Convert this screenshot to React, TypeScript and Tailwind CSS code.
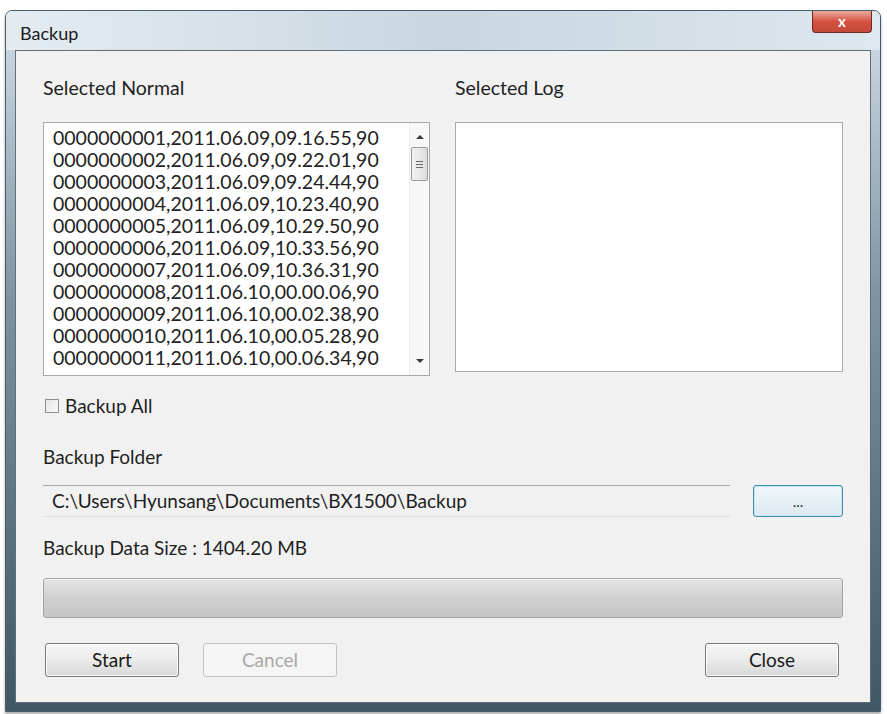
const rows = [
  '0000000001,2011.06.09,09.16.55,90',
  '0000000002,2011.06.09,09.22.01,90',
  '0000000003,2011.06.09,09.24.44,90',
  '0000000004,2011.06.09,10.23.40,90',
  '0000000005,2011.06.09,10.29.50,90',
  '0000000006,2011.06.09,10.33.56,90',
  '0000000007,2011.06.09,10.36.31,90',
  '0000000008,2011.06.10,00.00.06,90',
  '0000000009,2011.06.10,00.02.38,90',
  '0000000010,2011.06.10,00.05.28,90',
  '0000000011,2011.06.10,00.06.34,90',
];

const font = "font-['Lato','Open_Sans',sans-serif]";

function PushButton({ label, disabled }: { label: string; disabled?: boolean }) {
  return (
    <button
      className={
        disabled
          ? 'h-[34px] w-[134px] rounded-[3px] border border-[#c4c4c4] bg-[#f5f5f5] text-[19px] text-[#a8a8a8]'
          : 'h-[34px] w-[134px] rounded-[3px] border border-[#7a7a7a] bg-gradient-to-b from-[#f6f6f6] via-[#ebebeb] to-[#d8d8d8] text-[19px] text-[#1a1a1a] shadow-[inset_0_0_0_1px_#fbfbfb]'
      }
    >
      {label}
    </button>
  );
}

function ListScrollbar() {
  return (
    <div className="flex w-[20px] flex-col items-center border-l border-[#ececec] bg-[#f7f7f7] py-[12px]">
      <span className="h-0 w-0 border-x-[4px] border-b-[4px] border-x-transparent border-b-[#3c3c3c]" />
      <div className="mt-[8px] flex h-[34px] w-[17px] flex-col items-center justify-center gap-[2px] rounded-[2px] border border-[#9a9a9a] bg-gradient-to-r from-[#f4f4f4] to-[#dcdcdc]">
        <span className="h-px w-[7px] bg-[#6a6a6a]" />
        <span className="h-px w-[7px] bg-[#6a6a6a]" />
        <span className="h-px w-[7px] bg-[#6a6a6a]" />
      </div>
      <div className="flex-1" />
      <span className="h-0 w-0 border-x-[4px] border-t-[4px] border-x-transparent border-t-[#3c3c3c]" />
    </div>
  );
}

export default function App() {
  return (
    <div className={`h-[714px] w-[887px] bg-white pl-[5px] pt-[10px] ${font}`}>
      {/* window frame */}
      <div className="flex h-[702px] w-[876px] flex-col rounded-t-[7px] border border-[#4a5c68] bg-gradient-to-b from-[#d3dfe8] via-[#7f95a5] via-40% to-[#3f5767] shadow-[0_2px_3px_rgba(0,0,0,0.35)]">
        <div className="flex h-[39px] items-start justify-between rounded-t-[6px] bg-gradient-to-r from-[#e4ecf2] via-[#c9d6e0] to-[#dde7ee] pl-[14px] pr-[8px]">
          <span className="mt-[10px] text-[18px] leading-[24px] text-[#1c1c1c]">Backup</span>
          <div className="flex h-[22px] w-[60px] items-center justify-center rounded-b-[4px] border border-t-0 border-[#6b2a24] bg-gradient-to-b from-[#eba99f] via-[#d4503f] to-[#c4493a] text-[15px] font-bold leading-none text-white">
            x
          </div>
        </div>

        {/* client area */}
        <div className="mx-[9px] mb-[8px] flex flex-1 flex-col border border-[#5f707c] bg-[#f1f1f1] px-[27px] pt-[25px] text-[19px] leading-[24px] text-[#1f1f1f]">
          <div className="flex gap-[25px]">
            <div className="flex w-[387px] flex-col">
              <span className="text-[19.5px]">Selected Normal</span>
              <div className="mt-[22px] flex h-[254px] border border-[#a9a9a9] bg-white">
                <div className="flex-1 pl-[9px] pt-[4px] text-[19.5px] leading-[22px] text-[#222]">
                  {rows.map((r) => (
                    <div key={r}>{r}</div>
                  ))}
                </div>
                <ListScrollbar />
              </div>
            </div>
            <div className="flex w-[388px] flex-col">
              <span className="text-[19.5px]">Selected Log</span>
              <div className="mt-[22px] h-[250px] border border-[#a9a9a9] bg-white" />
            </div>
          </div>

          <label className="mt-[18px] flex items-center gap-[6px] pl-[2px]">
            <span className="h-[14px] w-[14px] border border-[#8e8f8f] bg-gradient-to-br from-[#e6e6e6] to-[#fafafa]" />
            Backup All
          </label>

          <span className="mt-[27px]">Backup Folder</span>

          <div className="mt-[16px] flex items-center">
            <div className="flex h-[32px] w-[687px] items-center border-t border-b border-t-[#a8a8a8] border-b-[#dcdcdc] pl-[9px] text-[19px]">
              C:\Users\Hyunsang\Documents\BX1500\Backup
            </div>
            <div className="flex-1" />
            <button className="h-[32px] w-[90px] rounded-[3px] border border-[#3c8fb0] bg-gradient-to-b from-[#f2f8fb] to-[#dbe9f0] text-[15px] leading-none text-[#333] shadow-[inset_0_0_0_1px_#c8e6f2]">
              ...
            </button>
          </div>

          <span className="mt-[19px]">Backup Data Size : 1404.20 MB</span>

          <div className="mt-[18px] h-[40px] rounded-[3px] border border-[#a4a4a4] bg-gradient-to-b from-[#e4e4e4] via-[#cfcfcf] to-[#c6c6c6] shadow-[inset_0_1px_0_#f2f2f2]" />

          <div className="mt-[25px] flex items-center pl-[2px] pr-[4px]">
            <PushButton label="Start" />
            <div className="w-[24px]" />
            <PushButton label="Cancel" disabled />
            <div className="flex-1" />
            <PushButton label="Close" />
          </div>
        </div>
      </div>
    </div>
  );
}
